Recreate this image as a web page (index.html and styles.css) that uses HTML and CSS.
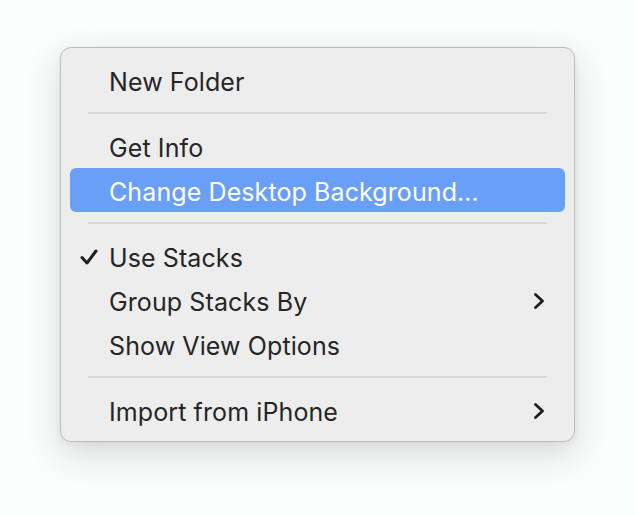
FILE: index.html
```html
<!DOCTYPE html>
<html lang="en">
<head>
<meta charset="utf-8">
<title>Desktop context menu</title>
<link rel="stylesheet" href="styles.css">
</head>
<body>
<div class="menu">
  <div class="item"><span class="check"></span><span class="label">New Folder</span><span class="arrow"></span></div>
  <div class="sep"></div>
  <div class="item"><span class="check"></span><span class="label">Get Info</span><span class="arrow"></span></div>
  <div class="item active"><span class="check"></span><span class="label">Change Desktop Background…</span><span class="arrow"></span></div>
  <div class="sep"></div>
  <div class="item"><span class="check"><svg viewBox="0 0 18 16" width="18" height="16"><path d="M2 8.5 L7 14 L16 2" fill="none" stroke="#1d1d1d" stroke-width="3" stroke-linecap="round" stroke-linejoin="round"/></svg></span><span class="label">Use Stacks</span><span class="arrow"></span></div>
  <div class="item"><span class="check"></span><span class="label">Group Stacks By</span><span class="arrow"><svg viewBox="0 0 10 16" width="10" height="16"><path d="M1.5 1.5 L8.5 8 L1.5 14.5" fill="none" stroke="#1d1d1d" stroke-width="2.8" stroke-linecap="round" stroke-linejoin="round"/></svg></span></div>
  <div class="item"><span class="check"></span><span class="label">Show View Options</span><span class="arrow"></span></div>
  <div class="sep"></div>
  <div class="item"><span class="check"></span><span class="label">Import from iPhone</span><span class="arrow"><svg viewBox="0 0 10 16" width="10" height="16"><path d="M1.5 1.5 L8.5 8 L1.5 14.5" fill="none" stroke="#1d1d1d" stroke-width="2.8" stroke-linecap="round" stroke-linejoin="round"/></svg></span></div>
</div>
</body>
</html>
```
FILE: styles.css
```css
html, body {
  margin: 0;
  padding: 0;
  background: #fbfcfc;
}
body {
  width: 636px;
  height: 516px;
  padding: 47px 0 0 60px;
  box-sizing: border-box;
  font-family: Inter, "Liberation Sans", sans-serif;
}
.menu {
  width: 515px;
  box-sizing: border-box;
  background: #ededed;
  border: 1px solid #bcbcbc;
  border-radius: 11px;
  padding: 10px 9px 9px;
  box-shadow: 0 12px 34px rgba(40, 50, 50, 0.16), 0 2px 6px rgba(40, 50, 50, 0.06);
}
.item {
  display: grid;
  grid-template-columns: 39px 1fr auto;
  align-items: center;
  height: 44px;
  padding-right: 21px;
  border-radius: 6px;
  color: #262626;
  font-size: 25px;
  letter-spacing: 0.1px;
}
.item.active {
  background: #6a9ff8;
  color: #ffffff;
}
.check {
  display: flex;
  align-items: center;
  padding-left: 10px;
  padding-top: 2px;
}
.label {
  padding-top: 3px;
}
.arrow {
  display: flex;
  align-items: center;
  padding-top: 2px;
}
.sep {
  height: 22px;
  box-sizing: border-box;
  padding-top: 10px;
  margin: 0 18px;
}
.sep::after {
  content: "";
  display: block;
  height: 2px;
  background: #d7d7d7;
}
```
